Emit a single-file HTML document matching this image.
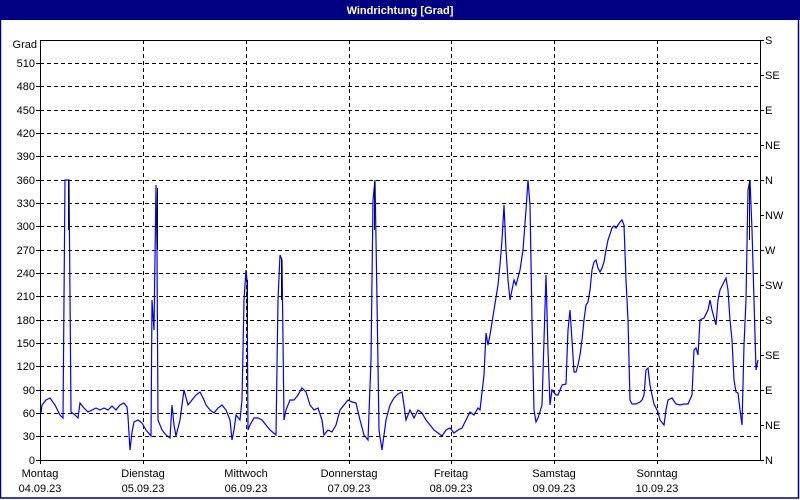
<!DOCTYPE html>
<html><head><meta charset="utf-8"><style>
html,body{margin:0;padding:0;width:800px;height:500px;overflow:hidden;background:#fff;}
svg{display:block;font-family:"Liberation Sans",sans-serif;font-size:11px;}
</style></head><body>
<svg width="800" height="500" viewBox="0 0 800 500" xmlns="http://www.w3.org/2000/svg">
<rect x="0" y="0" width="800" height="500" fill="#fff"/>
<rect x="0" y="0" width="800" height="20" fill="#000080"/>
<rect x="0.5" y="19" width="798" height="479" fill="none" stroke="#000080" stroke-width="1.5"/>
<text x="400" y="14" fill="#fff" font-weight="bold" text-anchor="middle">Windrichtung [Grad]</text>
<g stroke="#000" stroke-width="1" stroke-dasharray="4,3" shape-rendering="crispEdges">
<line x1="40" x2="760" y1="63.5" y2="63.5"/><line x1="40" x2="760" y1="86.5" y2="86.5"/>
<line x1="40" x2="760" y1="110.5" y2="110.5"/><line x1="40" x2="760" y1="133.5" y2="133.5"/>
<line x1="40" x2="760" y1="156.5" y2="156.5"/><line x1="40" x2="760" y1="180.5" y2="180.5"/>
<line x1="40" x2="760" y1="203.5" y2="203.5"/><line x1="40" x2="760" y1="226.5" y2="226.5"/>
<line x1="40" x2="760" y1="250.5" y2="250.5"/><line x1="40" x2="760" y1="273.5" y2="273.5"/>
<line x1="40" x2="760" y1="296.5" y2="296.5"/><line x1="40" x2="760" y1="320.5" y2="320.5"/>
<line x1="40" x2="760" y1="343.5" y2="343.5"/><line x1="40" x2="760" y1="366.5" y2="366.5"/>
<line x1="40" x2="760" y1="390.5" y2="390.5"/><line x1="40" x2="760" y1="413.5" y2="413.5"/>
<line x1="40" x2="760" y1="436.5" y2="436.5"/>
<line x1="143.5" x2="143.5" y1="40" y2="460"/><line x1="246.5" x2="246.5" y1="40" y2="460"/>
<line x1="349.5" x2="349.5" y1="40" y2="460"/><line x1="451.5" x2="451.5" y1="40" y2="460"/>
<line x1="554.5" x2="554.5" y1="40" y2="460"/><line x1="657.5" x2="657.5" y1="40" y2="460"/>
</g>
<g stroke="#000" stroke-width="1" shape-rendering="crispEdges" fill="none">
<polyline points="40.5,460.5 40.5,40.5 760.5,40.5 760.5,460.5 40.5,460.5"/>
<path d="M36 63.5h4M36 86.5h4M36 110.5h4M36 133.5h4M36 156.5h4M36 180.5h4M36 203.5h4M36 226.5h4M36 250.5h4M36 273.5h4M36 296.5h4M36 320.5h4M36 343.5h4M36 366.5h4M36 390.5h4M36 413.5h4M36 436.5h4M36 460.5h4"/>
<path d="M760 40.5h4M760 75.5h4M760 110.5h4M760 145.5h4M760 180.5h4M760 215.5h4M760 250.5h4M760 285.5h4M760 320.5h4M760 355.5h4M760 390.5h4M760 425.5h4M760 460.5h4"/>
<path d="M40.5 460v4M143.5 460v4M246.5 460v4M349.5 460v4M451.5 460v4M554.5 460v4M657.5 460v4"/>
</g>
<g text-anchor="end" fill="#000">
<text x="37" y="48">Grad</text>
<text x="35" y="67">510</text><text x="35" y="90">480</text><text x="35" y="114">450</text>
<text x="35" y="137">420</text><text x="35" y="160">390</text><text x="35" y="184">360</text>
<text x="35" y="207">330</text><text x="35" y="230">300</text><text x="35" y="254">270</text>
<text x="35" y="277">240</text><text x="35" y="300">210</text><text x="35" y="324">180</text>
<text x="35" y="347">150</text><text x="35" y="370">120</text><text x="35" y="394">90</text>
<text x="35" y="417">60</text><text x="35" y="440">30</text><text x="35" y="464">0</text>
</g>
<g fill="#000">
<text x="765" y="44">S</text><text x="765" y="79">SE</text><text x="765" y="114">E</text>
<text x="765" y="149">NE</text><text x="765" y="184">N</text><text x="765" y="219">NW</text>
<text x="765" y="254">W</text><text x="765" y="289">SW</text><text x="765" y="324">S</text>
<text x="765" y="359">SE</text><text x="765" y="394">E</text><text x="765" y="429">NE</text>
<text x="765" y="464">N</text>
</g>
<g fill="#000" text-anchor="middle">
<text x="40" y="477">Montag</text><text x="40" y="492">04.09.23</text>
<text x="143" y="477">Dienstag</text><text x="143" y="492">05.09.23</text>
<text x="246" y="477">Mittwoch</text><text x="246" y="492">06.09.23</text>
<text x="349" y="477">Donnerstag</text><text x="349" y="492">07.09.23</text>
<text x="451" y="477">Freitag</text><text x="451" y="492">08.09.23</text>
<text x="554" y="477">Samstag</text><text x="554" y="492">09.09.23</text>
<text x="657" y="477">Sonntag</text><text x="657" y="492">10.09.23</text>
</g>
<polyline fill="none" stroke="#0000ff" stroke-width="1.2" points="41,413 42,405 46,400 50,398 55,405 60,415 63,418 65,180 67,180 69,180 71,412 75,415 78,418 80,403 84,408 88,412 92,410 96,408 100,410 104,408 108,410 112,406 116,410 120,405 124,403 127,407 128,417 130,450 132,432 134,422 138,420 142,423 146,430 151,436 152,300 154,330 156,185 157,250 158,420 162,430 166,435 170,438 172,405 174,425 176,436 180,420 184,390 188,405 192,400 196,395 200,392 204,400 206,405 210,410 214,413 218,408 222,405 226,410 230,420 232,440 234,430 236,415 240,420 242,400 244,300 246,270 247,280 248,430 250,425 254,418 258,418 262,420 266,425 270,430 276,435 278,300 280,255 282,260 284,420 286,410 290,400 294,400 298,395 302,388 306,392 310,405 314,410 318,408 322,420 324,435 328,430 332,432 336,425 340,410 344,405 348,400 352,402 356,403 360,420 364,435 368,440 371,360 373,200 375,180 377,300 379,430 382,450 386,420 390,405 394,398 398,394 402,392 404,405 406,420 410,410 414,418 418,410 422,413 426,420 430,425 434,430 438,433 442,436 446,430 450,428 454,433 458,430 462,428 466,420 470,412 474,415 478,408 480,410 484,375 486,333 488,345 490,335 494,310 498,285 500,265 502,240 504,205 506,250 508,280 510,300 512,290 514,280 516,285 520,270 523,250 526,210 528,180 530,205 532,320 534,410 536,422 538,418 542,405 544,340 546,275 548,350 550,405 552,390 556,395 558,395 560,390 562,385 566,384 568,330 570,310 572,340 574,372 576,372 578,365 580,355 582,340 584,320 586,305 588,302 590,290 592,270 594,262 596,260 598,268 600,272 602,268 604,262 606,250 608,240 612,228 614,226 616,228 618,225 620,222 622,220 624,225 626,280 628,320 630,400 632,404 636,404 640,402 642,400 644,395 646,370 648,368 650,385 652,395 654,404 656,408 658,412 660,420 664,425 666,410 668,400 672,398 676,404 680,405 684,404 688,404 692,395 694,350 696,348 698,355 700,320 704,318 708,310 710,300 712,310 716,325 718,300 720,290 724,282 726,278 728,290 730,320 732,340 734,380 736,392 738,393 740,410 742,425 744,345 746,300 748,190 750,180 752,230 754,300 756,370 758,360"/>
<g stroke="#000" stroke-width="1" shape-rendering="crispEdges">
<line x1="68.5" x2="68.5" y1="180" y2="230"/><line x1="157.5" x2="157.5" y1="188" y2="250"/>
<line x1="247.5" x2="247.5" y1="280" y2="330"/><line x1="281.5" x2="281.5" y1="258" y2="300"/>
<line x1="374.5" x2="374.5" y1="182" y2="230"/><line x1="749.5" x2="749.5" y1="180" y2="240"/>
</g>
</svg>
</body></html>
